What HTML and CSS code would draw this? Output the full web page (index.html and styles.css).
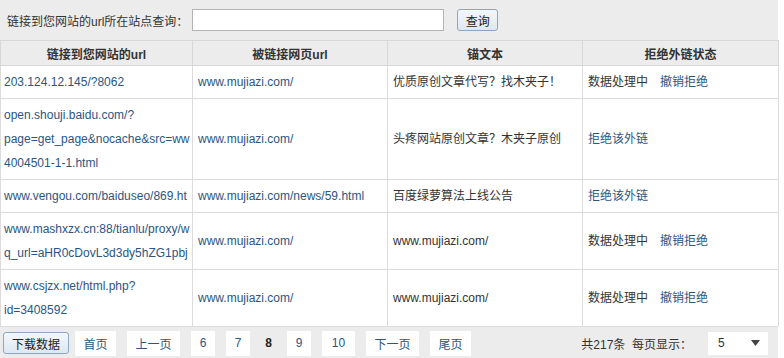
FILE: index.html
```html
<!DOCTYPE html>
<html lang="zh-CN">
<head>
    <meta charset="UTF-8">
    <title>外链拒绝</title>
    <link rel="stylesheet" href="styles.css">
</head>
<body>
    <div class="page">
        <!-- search bar -->
        <form class="search-bar">
            <label for="siteUrl">链接到您网站的url所在站点查询：</label>
            <input type="text" id="siteUrl" class="search-input">
            <button type="button" class="btn">查询</button>
        </form>

        <table class="link-table">
            <colgroup>
                <col class="c1"><col class="c2"><col class="c3"><col class="c4">
            </colgroup>
            <thead>
                <tr>
                    <th>链接到您网站的url</th>
                    <th>被链接网页url</th>
                    <th>锚文本</th>
                    <th>拒绝外链状态</th>
                </tr>
            </thead>
            <tbody>
                <tr>
                    <td><a href="#">203.124.12.145/?8062</a></td>
                    <td><a href="#">www.mujiazi.com/</a></td>
                    <td>优质原创文章代写？找木夹子！</td>
                    <td>数据处理中<a href="#" class="action">撤销拒绝</a></td>
                </tr>
                <tr>
                    <td><a href="#">open.shouji.baidu.com/?<br>page=get_page&amp;nocache&amp;src=ww<br>4004501-1-1.html</a></td>
                    <td><a href="#">www.mujiazi.com/</a></td>
                    <td>头疼网站原创文章？木夹子原创</td>
                    <td><a href="#">拒绝该外链</a></td>
                </tr>
                <tr>
                    <td><a href="#">www.vengou.com/baiduseo/869.ht</a></td>
                    <td><a href="#">www.mujiazi.com/news/59.html</a></td>
                    <td>百度绿萝算法上线公告</td>
                    <td><a href="#">拒绝该外链</a></td>
                </tr>
                <tr>
                    <td><a href="#">www.mashxzx.cn:88/tianlu/proxy/w<br>q_url=aHR0cDovL3d3dy5hZG1pbj</a></td>
                    <td><a href="#">www.mujiazi.com/</a></td>
                    <td>www.mujiazi.com/</td>
                    <td>数据处理中<a href="#" class="action">撤销拒绝</a></td>
                </tr>
                <tr>
                    <td><a href="#">www.csjzx.net/html.php?<br>id=3408592</a></td>
                    <td><a href="#">www.mujiazi.com/</a></td>
                    <td>www.mujiazi.com/</td>
                    <td>数据处理中<a href="#" class="action">撤销拒绝</a></td>
                </tr>
            </tbody>
        </table>

        <!-- pagination -->
        <div class="pager">
            <button type="button" class="btn btn-download">下载数据</button>
            <a href="#" class="pg pg-wide">首页</a>
            <a href="#" class="pg pg-wide3">上一页</a>
            <a href="#" class="pg">6</a>
            <a href="#" class="pg">7</a>
            <span class="pg-current">8</span>
            <a href="#" class="pg">9</a>
            <a href="#" class="pg pg-two">10</a>
            <a href="#" class="pg pg-wide3">下一页</a>
            <a href="#" class="pg pg-wide">尾页</a>
            <span class="total">共217条&nbsp;&nbsp;每页显示：</span>
            <div class="per-page">
                <span>5</span>
                <svg width="9" height="6" viewBox="0 0 9 6"><path d="M0 0h9L4.5 6z" fill="#444"/></svg>
            </div>
        </div>
    </div>
</body>
</html>
```

FILE: styles.css
```css
body {
    margin: 0;
    padding: 0;
    background-color: #fff;
    font-family: "Liberation Sans", "Noto Sans CJK SC", sans-serif;
    font-size: 12px;
    color: #333;
}
a {
    color: #2b5583;
    text-decoration: none;
}
.page {
    width: 778px;
    background-color: #ececec;
}
.search-bar {
    display: flex;
    align-items: center;
    height: 40px;
    margin: 0;
    padding-left: 7px;
    box-sizing: border-box;
}
.search-bar label {
    color: #333;
}
.search-input {
    width: 252px;
    height: 22px;
    margin-left: 4px;
    padding: 0;
    border: 1px solid #b4b4b4;
    box-sizing: border-box;
    background: #fff;
}
.btn {
    font-family: inherit;
    font-size: 12px;
    color: #222;
    background: linear-gradient(#f2f7fc, #dde8f3);
    border: 1px solid #8fa6bf;
    border-radius: 3px;
    padding: 0;
    cursor: pointer;
}
.search-bar .btn {
    width: 41px;
    height: 22px;
    margin-left: 13px;
}
.link-table {
    width: 778px;
    border-collapse: collapse;
    table-layout: fixed;
    background: #fff;
}
.link-table .c1 { width: 192px; }
.link-table .c2 { width: 195px; }
.link-table .c3 { width: 195px; }
.link-table .c4 { width: 196px; }
.link-table th {
    height: 24px;
    padding: 0;
    background: #ececec;
    border: 1px solid #d8d8d8;
    font-weight: bold;
    color: #333;
    text-align: center;
}
.link-table td {
    padding: 4px 0 4px 5px;
    line-height: 24px;
    border: 1px solid #dcdcdc;
    white-space: nowrap;
    overflow: hidden;
    vertical-align: middle;
}
.link-table td:first-child {
    padding-left: 3px;
}
.link-table .action {
    margin-left: 12px;
}
.link-table tr:last-child td {
    border-bottom: none;
}
.pager {
    display: flex;
    align-items: center;
    height: 33px;
    padding-left: 3px;
    border-top: 1px solid #dcdcdc;
    box-sizing: border-box;
}
.btn-download {
    width: 66px;
    height: 22px;
}
.pg {
    display: inline-flex;
    align-items: center;
    justify-content: center;
    width: 24px;
    height: 25px;
    margin-left: 11px;
    background: #fff;
    color: #2b5583;
}
.pager .btn-download + .pg {
    margin-left: 6px;
}
.pg-wide { width: 41px; }
.pg-wide3 { width: 53px; }
.pg-two { width: 33px; }
.pg-current {
    width: 15px;
    margin-left: 11px;
    text-align: center;
    font-weight: bold;
    color: #222;
}
.total {
    margin-left: auto;
    color: #333;
}
.per-page {
    display: flex;
    align-items: center;
    justify-content: space-between;
    width: 60px;
    height: 23px;
    margin: 0 10px 0 16px;
    padding: 0 8px 0 10px;
    box-sizing: border-box;
    background: #fff;
}
```
